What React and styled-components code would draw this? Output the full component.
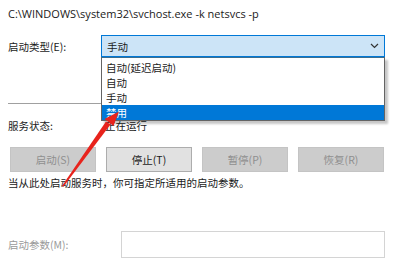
import React from "react";
import styled, { createGlobalStyle } from "styled-components";

const GlobalStyle = createGlobalStyle`
  html, body {
    margin: 0;
    padding: 0;
    background: #ffffff;
  }
  body {
    font-family: "Noto Sans CJK SC", "Noto Sans", sans-serif;
    color: #1a1a1a;
  }
`;

const Page = styled.div`
  position: relative;
  width: 400px;
  height: 271px;
  overflow: hidden;
  background: #fff;
  padding: 0 15px 0 8px;
  box-sizing: border-box;
  display: flex;
  flex-direction: column;
`;

const PathText = styled.div`
  margin-top: 6px;
  height: 16px;
  font-family: "Open Sans", "Noto Sans", sans-serif;
  font-size: 11px;
  line-height: 16px;
`;

const Row = styled.div`
  display: flex;
  align-items: center;
  flex: none;
  height: ${(p) => p.h || 22}px;
  margin-top: ${(p) => p.mt || 0}px;
`;

const Label = styled.div`
  width: ${(p) => p.w || 93}px;
  flex: none;
  font-size: 10.5px;
  color: ${(p) => (p.muted ? "#9a9a9a" : "#1a1a1a")};
`;

const ComboWrap = styled.div`
  position: relative;
  flex: 1;
  height: 22px;
`;

const Combo = styled.div`
  height: 100%;
  box-sizing: border-box;
  background: #cce4f7;
  border: 1px solid #0078d7;
  display: flex;
  align-items: center;
  justify-content: space-between;
  padding: 0 5px 0 5px;
  font-size: 10.5px;
`;

const DropList = styled.div`
  position: absolute;
  left: 0;
  right: 0;
  top: 22px;
  padding: 2px 0 0;
  background: #fff;
  border: 1px solid #646464;
  border-top-color: #3c6e8f;
  box-shadow: 3px 3px 2px rgba(0, 0, 0, 0.22);
  z-index: 2;
`;

const Option = styled.div`
  height: 15px;
  line-height: 15px;
  padding-left: 4px;
  font-size: 10.5px;
  background: ${(p) => (p.selected ? "#0078d7" : "#fff")};
  color: ${(p) => (p.selected ? "#fff" : "#1a1a1a")};
`;

const Separator = styled.div`
  flex: none;
  height: 1px;
  background: #a0a0a0;
  margin-top: 46px;
`;

const StatusValue = styled.div`
  font-size: 10.5px;
  padding-left: 2px;
`;

const ButtonRow = styled.div`
  display: flex;
  flex: none;
  gap: 10px;
  margin-top: 11px;
  padding-left: 2px;
`;

const Button = styled.div`
  width: 86px;
  height: 25px;
  box-sizing: border-box;
  display: flex;
  align-items: center;
  justify-content: center;
  font-size: 10.5px;
  background: ${(p) => (p.disabled ? "#cccccc" : "#e1e1e1")};
  border: 1px solid ${(p) => (p.disabled ? "#c4c4c4" : "#adadad")};
  color: ${(p) => (p.disabled ? "#8f8f8f" : "#1a1a1a")};
`;

const Description = styled.div`
  flex: none;
  margin-top: 3px;
  height: 16px;
  line-height: 16px;
  font-size: 10.5px;
`;

const Input = styled.div`
  flex: 1;
  height: 27px;
  box-sizing: border-box;
  border: 1px solid #d4d4d4;
  background: #fff;
`;

const ArrowLayer = styled.svg`
  position: absolute;
  left: 0;
  top: 0;
  pointer-events: none;
  z-index: 3;
`;

function Chevron() {
  return (
    <svg width="9" height="6" viewBox="0 0 9 6">
      <path d="M1 1 L4.5 4.5 L8 1" fill="none" stroke="#333" strokeWidth="1.2" />
    </svg>
  );
}

export default function App() {
  return (
    <>
      <GlobalStyle />
      <Page>
        <PathText>C:\WINDOWS\system32\svchost.exe -k netsvcs -p</PathText>

        <Row mt={13}>
          <Label>启动类型(E):</Label>
          <ComboWrap>
            <Combo>
              <span>手动</span>
              <Chevron />
            </Combo>
            <DropList>
              <Option>自动(延迟启动)</Option>
              <Option>自动</Option>
              <Option>手动</Option>
              <Option selected>禁用</Option>
            </DropList>
          </ComboWrap>
        </Row>

        <Separator />

        <Row mt={10} h={22}>
          <Label w={95}>服务状态:</Label>
          <StatusValue>正在运行</StatusValue>
        </Row>

        <ButtonRow>
          <Button disabled>启动(S)</Button>
          <Button>停止(T)</Button>
          <Button disabled>暂停(P)</Button>
          <Button disabled>恢复(R)</Button>
        </ButtonRow>

        <Description>当从此处启动服务时，你可指定所适用的启动参数。</Description>

        <Row mt={40} h={27}>
          <Label muted w={113}>启动参数(M):</Label>
          <Input />
        </Row>

        <ArrowLayer width="400" height="271" viewBox="0 0 400 271">
          <path
            d="M62 186 L63.2 187 L110.5 124.5 L106 121.5 Z"
            fill="#e8231c"
          />
          <path d="M119 111.5 L104.5 119 L113.5 126 Z" fill="#e8231c" />
        </ArrowLayer>
      </Page>
    </>
  );
}
